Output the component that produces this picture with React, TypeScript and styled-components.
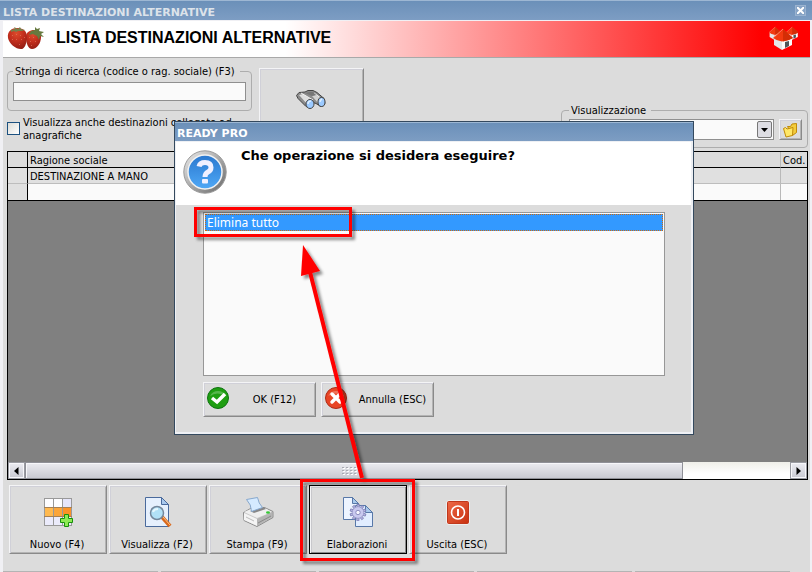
import React from 'react';
import styled, { createGlobalStyle, css } from 'styled-components';

const Global = createGlobalStyle`
  *, *::before, *::after { box-sizing: border-box; }
  html, body { margin: 0; height: 100%; }
  #root { height: 100%; }
  body, button, input, select, table {
    font-family: "DejaVu Sans Condensed", "DejaVu Sans", sans-serif;
    font-size: 11px;
    line-height: 13px;
    color: #000;
  }
`;

const Window = styled.div`
  position: relative;
  display: flex;
  flex-direction: column;
  width: 100%;
  height: 100vh;
  min-height: 572px;
  overflow: hidden;
  background: #dcdcdc;
`;

const TitleBar = styled.header`
  display: flex;
  flex: none;
  align-items: center;
  justify-content: space-between;
  height: 20px;
  padding: 4px 6px 0 3px;
  border-top: 1px solid #9db7d3;
  background: linear-gradient(#6b90b9, #7d9dc3);
`;

const TitleText = styled.span<{ $active?: boolean }>`
  font-family: "DejaVu Sans", sans-serif;
  font-size: 11px;
  font-weight: 700;
  line-height: 14px;
  white-space: nowrap;
  color: ${p => (p.$active ? '#fff' : '#dde3ea')};
`;

const CloseButton = styled.button`
  display: flex;
  align-items: center;
  justify-content: center;
  width: 11px;
  height: 11px;
  margin-bottom: 4px;
  padding: 0;
  border: 1px solid #9ab3d0;
  background: #86a3c5;
`;

const Frame = styled.div`
  display: flex;
  flex: 1;
  flex-direction: column;
  min-height: 0;
  border: solid #f0f0f4;
  border-width: 1px 2px 0 3px;
`;

const Banner = styled.div`
  display: flex;
  flex: none;
  align-items: center;
  gap: 11px;
  height: 37px;
  padding: 0 10px 2px 4px;
  border-bottom: 1px solid #a9a9a9;
  background: linear-gradient(90deg, #fff 35%, #f00 94%);
`;

const BannerTitle = styled.h1`
  flex: 1;
  margin: 0;
  font: 700 16px/20px "Liberation Sans", sans-serif;
  white-space: nowrap;
`;

const Filters = styled.section`
  display: flex;
  flex: none;
  justify-content: space-between;
  height: 93px;
  padding: 7px 2px 0 4px;
`;

const FilterLeft = styled.div`
  display: flex;
  gap: 7px;
`;

const SearchColumn = styled.div`
  display: flex;
  flex-direction: column;
  gap: 5px;
  width: 245px;
`;

const Group = styled.fieldset`
  min-width: 0;
  margin: 0;
  border: 1px solid #adadad;
  border-radius: 4px;
`;

const SearchGroup = styled(Group)`
  height: 46px;
  padding: 4px 5px 0;
`;

const ViewGroup = styled(Group)`
  align-self: flex-end;
  width: 247px;
  height: 44px;
  padding: 2px 5px 0 7px;
  margin-bottom: 3px;
`;

const Legend = styled.legend`
  padding: 0 5px 0 2px;
  white-space: nowrap;
`;

const ViewRow = styled.div`
  display: flex;
  gap: 5px;
`;

const SearchInput = styled.input`
  display: block;
  width: 100%;
  height: 19px;
  padding: 0 3px;
  border: 1px solid #8f8f8f;
  background: #fafafa;
`;

const CheckLabel = styled.label`
  display: flex;
  align-items: flex-start;
  gap: 3px;
  line-height: 13px;
`;

const CheckBox = styled.input`
  flex: none;
  appearance: none;
  width: 13px;
  height: 13px;
  margin: 6px 0 0;
  border: 1px solid #1c5180;
  background: linear-gradient(135deg, #dcdcd7, #fff);
`;

const raised = css`
  border: 1px solid;
  border-color: #f4f4f6 #8a8a8a #8a8a8a #f4f4f6;
  background: #dcdcdc;
  box-shadow: inset 1px 1px #d0d0d8, inset -1px -1px #b4b4b4;
`;

const SearchButton = styled.button`
  ${raised}
  display: flex;
  justify-content: center;
  width: 105px;
  height: 72px;
  margin-top: 3px;
  padding: 21px 2px 0 0;
`;

const SelectWrap = styled.div`
  position: relative;
  flex: 1;
`;

const Select = styled.select`
  appearance: none;
  width: 100%;
  height: 21px;
  border: 1px solid #8f8f8f;
  border-radius: 0;
  background: #fafafa;
`;

const SelectArrow = styled.svg`
  position: absolute;
  top: 2px;
  right: 2px;
  pointer-events: none;
`;

const FolderButton = styled.button`
  ${raised}
  display: flex;
  align-items: center;
  justify-content: center;
  width: 23px;
  height: 21px;
  padding: 0 1px 0 0;
`;

const GridPanel = styled.section`
  display: flex;
  flex: 1;
  flex-direction: column;
  justify-content: space-between;
  min-height: 0;
  margin: 0 2px 0 4px;
  border: 1px solid #000;
  background: #808080;
`;

const Table = styled.table`
  width: 100%;
  border-collapse: separate;
  border-spacing: 0;
  table-layout: fixed;
  border-bottom: 1px solid #000;
`;

const Cell = styled.td<{ $white?: boolean; $marker?: boolean }>`
  height: 16px;
  padding: 1px 0 0 2px;
  overflow: hidden;
  border-right: 1px solid ${p => (p.$marker ? '#000' : '#b9b9b9')};
  border-bottom: 1px solid #bdbdbd;
  background: ${p => (p.$white ? '#fafafa' : '#e0e0e0')};
  white-space: nowrap;
  &:last-child { border-right: 0; }
  tr:last-child > & { border-bottom: 0; }
`;

const HeadCell = styled.th<{ $marker?: boolean }>`
  height: 16px;
  padding: 1px 0 0 2px;
  overflow: hidden;
  border-right: 1px solid ${p => (p.$marker ? '#000' : '#b9b9b9')};
  border-bottom: 1px solid #000;
  background: #dcdcdc;
  font-weight: 400;
  text-align: left;
  white-space: nowrap;
  &:last-child { border-right: 0; }
`;

const ScrollBar = styled.div`
  display: flex;
  height: 17px;
  background: linear-gradient(#efefe9, #fff 70%);
`;

const ScrollEnd = styled.button`
  display: flex;
  flex: none;
  align-items: center;
  justify-content: center;
  width: 17px;
  height: 17px;
  padding: 0;
  border: 1px solid #9a9ba2;
  background: linear-gradient(#ececf2, #c9cad2);
  box-shadow: inset 0 0 0 1px #f7f7fa;
`;

const ScrollTrack = styled.div`
  display: flex;
  flex: 1;
`;

const ScrollThumb = styled.div`
  display: flex;
  align-items: center;
  justify-content: center;
  width: 86%;
  padding-right: 8px;
  border: 1px solid #8f9097;
  background: linear-gradient(#ebebf0, #c9cad2);
  box-shadow: inset 1px 1px #f7f7fa;
`;

const Toolbar = styled.nav`
  display: flex;
  flex: none;
  gap: 2px;
  padding: 5px 6px 17px;
`;

const ToolButton = styled.button<{ $current?: boolean }>`
  ${raised}
  display: flex;
  flex-direction: column;
  align-items: center;
  justify-content: space-between;
  width: 98px;
  height: 69px;
  padding: 11px 0 2px;
  ${p => p.$current && css`
    border-color: #000;
    box-shadow: inset 1px 1px #f4f4f6, inset -1px -1px #8a8a8a, inset 2px 2px #c8c8cc;
  `}
`;

const ToolText = styled.span`
  padding-right: 2px;
`;

const StatusBar = styled.footer`
  display: flex;
  flex: none;
  gap: 3px;
  height: 1px;
  padding-right: 20px;
`;

const StatusPane = styled.div`
  flex: 1;
  background: #b4b4b4;
`;

const Dialog = styled.div`
  position: absolute;
  top: 121px;
  right: 118px;
  left: 174px;
  display: flex;
  flex-direction: column;
  border: 1px solid #34495e;
  background: #dcdcdc;
`;

const DialogTitle = styled(TitleBar)`
  height: 19px;
  padding-left: 2px;
`;

const DialogFrame = styled.div`
  border: solid #eef0f4;
  border-width: 1px 2px 2px 1px;
`;

const DialogHead = styled.div`
  display: flex;
  gap: 13px;
  height: 63px;
  padding: 6px 6px 0;
  background: #fff;
`;

const Question = styled.h2`
  margin: 0;
  font: 700 13px/16px "DejaVu Sans", sans-serif;
  white-space: nowrap;
`;

const DialogBody = styled.div`
  padding: 7px 26px 15px 27px;
`;

const Options = styled.ul`
  height: 164px;
  margin: 0;
  padding: 1px;
  border: 1px solid #979797;
  background: #fafafa;
  list-style: none;
`;

const Option = styled.li`
  height: 17px;
  padding: 0 1px;
  border: 1px dotted #cc6a10;
  background: #3399ff;
  font: 12px/16px "Noto Sans", sans-serif;
  color: #fff;
`;

const DialogActions = styled.div`
  display: flex;
  gap: 5px;
  padding: 6px 0 0;
`;

const DialogButton = styled.button`
  ${raised}
  display: flex;
  align-items: center;
  width: 113px;
  height: 35px;
  padding: 0 3px;
`;

const ButtonIcon = styled.svg`
  flex: none;
  margin-bottom: 4px;
`;

const DialogButtonText = styled.span`
  flex: 1;
  padding-left: 6px;
  text-align: center;
`;

const Annotations = styled.svg`
  position: absolute;
  top: 0;
  left: 0;
  pointer-events: none;
`;

const Strawberries = () => (
  <svg width="38" height="26" viewBox="0 0 38 26" aria-hidden="true">
    <defs>
      <radialGradient id="berry" cx=".45" cy=".25" r=".75">
        <stop offset="0" stopColor="#dd4b2c" />
        <stop offset=".5" stopColor="#c32f1e" />
        <stop offset="1" stopColor="#951d13" />
      </radialGradient>
    </defs>
    <path d="M19 12c0-5 4-7 8-7 5 0 7 3 7 7 0 6-4 12-9 12-4 0-6-6-6-12z" fill="url(#berry)" />
    <path d="M1 13C0 6 5 3 10 3s10 2 10 9c0 7-3 12-5 12-5 1-13-5-14-11z" fill="url(#berry)" />
    <path d="M4 5l4-1-1-2 4 2 2-2 1 2 4 1-3 1-4 0-2 1-2-1-3 1z" fill="#75814c" />
    <path d="M24 6l4-1 0-3 2 2 3-1-1 3 5 1-3 2 3 3-4-1-1 4-2-4-4-2-4 1z" fill="#66793f" />
    <g fill="#e98368" opacity=".6">
      {[[5, 10], [9, 9], [13, 10], [5, 14], [9, 14], [14, 14], [12, 19], [17, 12], [22, 12], [26, 12], [23, 16], [28, 16], [24, 20]].map(([x, y]) => (
        <rect key={`${x}-${y}`} x={x} y={y} width="1" height="1" />
      ))}
    </g>
  </svg>
);

const House = ({ x, y, s }: { x: number; y: number; s: number }) => (
  <g transform={`translate(${x} ${y}) scale(${s})`}>
    <path d="M1 9l8 3v9l-8-5z" fill="#e4e6e8" />
    <path d="M9 12l10-3v7l-10 5z" fill="#fafafa" />
    <path d="M12 13l4-1v5l-4 2z" fill="#4f5558" />
    <path d="M10 0L0 9q4 3 9 3.500Q15 12 20 9z" fill="#f23a10" />
    <path d="M10 0l10 9q-5 3-10 3.500z" fill="#d42d06" />
    <path d="M10 0L0 9" stroke="#ff9a80" strokeWidth=".8" />
  </g>
);

const Houses = () => (
  <svg width="32" height="26" viewBox="0 0 32 26" aria-hidden="true">
    <House x={1} y={2} s={0.62} />
    <House x={18} y={2} s={0.62} />
    <House x={5} y={4} s={1} />
  </svg>
);

const Binoculars = () => (
  <svg width="30" height="20" viewBox="0 0 30 20" aria-hidden="true">
    <path d="M.500 5.500L3 2.500l6-.5 3-1.500h5l4 2 7 6 1 5-4 3-5-3-3-1-4 5-3-1-8-8z" fill="#8c8c8c" stroke="#444" />
    <path d="M3 5l4-1 9 6-4 5z" fill="#dedede" />
    <path d="M16 6l4-1 6 4-3 5z" fill="#d2d2d2" />
    <path d="M5 3l12 7M18 3l8 6" stroke="#f3f3f3" />
    <path d="M9 3l4-1h4l3 3-4 1z" fill="#777" />
    <ellipse cx="14" cy="14" rx="4" ry="4.500" fill="#9ccaff" stroke="#444" />
    <ellipse cx="25.500" cy="12" rx="3.500" ry="4.500" fill="#9ccaff" stroke="#444" />
    <path d="M12 14q0-3 3-3M24 12q0-2 2-3" fill="none" stroke="#ddeeff" strokeWidth="1.500" />
  </svg>
);

const Folders = () => (
  <svg width="16" height="16" viewBox="0 0 16 16" aria-hidden="true">
    <path d="M5.500 4.500l3 0 1.500-2.500 4.500-.5v9l-4 3z" fill="#f3cc3c" stroke="#c08a08" />
    <path d="M1.500 6.500l2-1 1.500 1.500 6-1.500-.5 8-6.500 1.500z" fill="#ffe766" stroke="#c08a08" />
  </svg>
);

const NewIcon = () => (
  <svg width="30" height="31" viewBox="0 0 30 31" aria-hidden="true">
    <rect x="1" y="1" width="27" height="27" fill="#fdfdff" />
    <rect x="20" y="1" width="8" height="9" fill="#e5e5fa" />
    <rect x="1" y="20" width="27" height="8" fill="#ebebfb" />
    <rect x="1" y="10" width="9" height="9" fill="#ffb94f" />
    <rect x="10" y="10" width="9" height="9" fill="#fba53a" />
    <rect x="19" y="10" width="9" height="9" fill="#fb9226" />
    <path d="M1 1.500h28M1 28.500h28M1.500 1v28M28.500 1v28M10.500 1v28M19.500 1v28" stroke="#999" fill="none" />
    <path d="M1 10.500h28M1 19.500h28" stroke="#a58055" />
    <path d="M21.500 17.500h4v4h4v4h-4v4h-4v-4h-4v-4h4z" fill="#8eea55" stroke="#17900b" />
  </svg>
);

const ViewIcon = () => (
  <svg width="28" height="31" viewBox="0 0 28 31" aria-hidden="true">
    <path d="M1.500.5h16l7 7v22h-23z" fill="#e6f0fd" stroke="#4a6a9c" />
    <path d="M17.500.5v7h7z" fill="#a9c9ee" stroke="#4a6a9c" />
    <path d="M18 20l8 9" stroke="#d9681c" strokeWidth="4" />
    <path d="M19 20l7 8" stroke="#ffc586" strokeWidth="1" />
    <circle cx="13" cy="16" r="6.500" fill="#b1e1f7" stroke="#74879b" strokeWidth="1.500" />
    <path d="M9 15q1-3 5-3" stroke="#e7f8ff" strokeWidth="2" fill="none" />
  </svg>
);

const PrintIcon = () => (
  <svg width="32" height="31" viewBox="0 0 32 31" aria-hidden="true">
    <path d="M1.500 15.500l7-4 14-1 8.500 4v6l-16 9-13-6z" fill="#c9c9c9" stroke="#8b8b8b" />
    <path d="M2 15l7-3 14-1 7 4-15 6z" fill="#efefef" />
    <path d="M2 16l13 6v7L2 23z" fill="#f4f4f4" />
    <path d="M15 22l15-7v5l-15 9z" fill="#b4b4b4" />
    <path d="M8 14l14-4 2 2-12 4z" fill="#888" />
    <path d="M4.500 2.500l11-2q1 6 5 10l-11 4q0-7-5-12z" fill="#d5eaff" stroke="#87a8cd" />
    <path d="M4 20l8 4" fill="none" stroke="#bbb" />
    <path d="M16 26l13-7" stroke="#8a8a8a" />
    <ellipse cx="26" cy="15.500" rx="2" ry="1.200" fill="#35c834" />
  </svg>
);

const gearTeeth = [0, 36, 72, 108, 144, 180, 216, 252, 288, 324];

const ProcessIcon = () => (
  <svg width="32" height="31" viewBox="0 0 32 31" aria-hidden="true">
    <path d="M1.500.5h9l6 6v16h-15z" fill="#edf4ff" stroke="#5878a8" />
    <path d="M10.500.5v6h6z" fill="#a8c9ec" stroke="#5878a8" />
    <path d="M13.500 8.500h10l7 7v14h-17z" fill="#e1edff" stroke="#5878a8" />
    <path d="M23.500 8.500v7h7z" fill="#a8c9ec" stroke="#5878a8" />
    {gearTeeth.map(a => (
      <rect key={a} x="15" y="7.500" width="2.200" height="4" fill="#b5b5e0" stroke="#7777b0" strokeWidth=".7" transform={`rotate(${a} 16 15.500)`} />
    ))}
    <circle cx="16" cy="15.500" r="5.800" fill="#c9c9ef" stroke="#8080b6" strokeWidth=".5" />
    <circle cx="16" cy="15.500" r="2.200" fill="#f6f6ff" stroke="#7777b0" strokeWidth=".8" />
  </svg>
);

const ExitIcon = () => (
  <svg width="24" height="31" viewBox="0 0 24 31" aria-hidden="true">
    <defs>
      <linearGradient id="exit" x1="0" y1="0" x2="1" y2="1">
        <stop offset="0" stopColor="#ee6a48" />
        <stop offset="1" stopColor="#c8300f" />
      </linearGradient>
    </defs>
    <rect x=".5" y="3.500" width="23" height="24" rx="2" fill="#fff" />
    <rect x="1.500" y="4.500" width="21" height="22" rx="1" fill="url(#exit)" stroke="#c0381c" />
    <circle cx="12" cy="15.500" r="6.500" fill="none" stroke="#fff" strokeWidth="1.600" />
    <path d="M12 12v7" stroke="#fff" strokeWidth="2" />
  </svg>
);

const QuestionIcon = () => (
  <svg width="46" height="46" viewBox="0 0 46 46" aria-hidden="true">
    <defs>
      <linearGradient id="ring" x1="0" y1="0" x2="1" y2="1">
        <stop offset="0" stopColor="#eee" />
        <stop offset="1" stopColor="#666" />
      </linearGradient>
      <linearGradient id="disc" x1="0" y1="0" x2="0" y2="1">
        <stop offset="0" stopColor="#2a78cf" />
        <stop offset="1" stopColor="#4fa8f6" />
      </linearGradient>
    </defs>
    <circle cx="23" cy="24" r="21.200" fill="url(#ring)" stroke="#999" />
    <circle cx="23" cy="24" r="17" fill="url(#disc)" stroke="#f2f2f2" strokeWidth="1.500" />
    <path d="M17 18.500q1-4 6-4 6 0 6 5 0 3-3 4.500-3 1.500-3 5" fill="none" stroke="#f0f0ff" strokeWidth="5" />
    <rect x="20" y="31" width="6" height="4.500" rx="1" fill="#f0f0ff" />
  </svg>
);

const RoundIcon = ({ ok }: { ok?: boolean }) => (
  <ButtonIcon width="24" height="24" viewBox="0 0 24 24" aria-hidden="true">
    <circle cx="11" cy="12" r="10.500" fill={ok ? '#1f9e12' : '#e84525'} stroke={ok ? '#0d7410' : '#ae2a16'} />
    <path d="M3 10a9 9 0 0116 0q-9-5-16 0z" fill="#fff" opacity=".25" />
    {ok
      ? <path d="M5 12l5 4 8-8" fill="none" stroke="#fff" strokeWidth="3.500" />
      : <path d="M7 8l8 8M15 8l-8 8" stroke="#fff" strokeWidth="3.500" strokeLinecap="round" />}
  </ButtonIcon>
);

const Triangle = ({ dir }: { dir: 'left' | 'right' }) => (
  <svg width="5" height="8" viewBox="0 0 5 8" aria-hidden="true">
    <path d={dir === 'left' ? 'M4.500 0v8L0 4z' : 'M.5 0v8L5 4z'} />
  </svg>
);

const Grip = () => (
  <svg width="16" height="8" viewBox="0 0 16 8" aria-hidden="true">
    {[0, 3, 6].map(y => [0, 4, 8, 12].map(x => (
      <g key={`${x}-${y}`}>
        <rect x={x + 1} y={y + 1} width="2" height="1" fill="#fff" />
        <rect x={x} y={y} width="2" height="1" fill="#a9aab2" />
      </g>
    )))}
  </svg>
);

const tools = [
  { label: 'Nuovo (F4)', icon: <NewIcon /> },
  { label: 'Visualizza (F2)', icon: <ViewIcon /> },
  { label: 'Stampa (F9)', icon: <PrintIcon /> },
  { label: 'Elaborazioni', icon: <ProcessIcon />, current: true },
  { label: 'Uscita (ESC)', icon: <ExitIcon /> },
];

export default function App() {
  return (
    <>
      <Global />
      <Window>
        <TitleBar>
          <TitleText>LISTA DESTINAZIONI ALTERNATIVE</TitleText>
          <CloseButton aria-label="Chiudi">
            <svg width="7" height="7" viewBox="0 0 7 7"><path d="M0 0l7 7M7 0L0 7" stroke="#fff" strokeWidth="2" /></svg>
          </CloseButton>
        </TitleBar>
        <Frame>
          <Banner>
            <Strawberries />
            <BannerTitle>LISTA DESTINAZIONI ALTERNATIVE</BannerTitle>
            <Houses />
          </Banner>
          <Filters>
            <FilterLeft>
              <SearchColumn>
                <SearchGroup>
                  <Legend><label htmlFor="search">Stringa di ricerca (codice o rag. sociale) (F3)</label></Legend>
                  <SearchInput id="search" type="text" />
                </SearchGroup>
                <CheckLabel>
                  <CheckBox type="checkbox" />
                  <span>Visualizza anche destinazioni collegate ad anagrafiche</span>
                </CheckLabel>
              </SearchColumn>
              <SearchButton aria-label="Cerca"><Binoculars /></SearchButton>
            </FilterLeft>
            <ViewGroup>
              <Legend><label htmlFor="view">Visualizzazione</label></Legend>
              <ViewRow>
                <SelectWrap>
                  <Select id="view"><option aria-label="Nessuna" /></Select>
                  <SelectArrow width="15" height="17" viewBox="0 0 15 17">
                    <rect x=".5" y=".5" width="14" height="16" rx="1.500" fill="#dddde3" stroke="#777" />
                    <path d="M4 7h7l-3.500 4z" />
                  </SelectArrow>
                </SelectWrap>
                <FolderButton aria-label="Apri"><Folders /></FolderButton>
              </ViewRow>
            </ViewGroup>
          </Filters>
          <GridPanel>
            <Table>
              <colgroup>
                <col width="20" />
                <col />
                <col width="26" />
              </colgroup>
              <thead>
                <tr><HeadCell $marker /><HeadCell>Ragione sociale</HeadCell><HeadCell>Cod.</HeadCell></tr>
              </thead>
              <tbody>
                <tr><Cell $marker /><Cell>DESTINAZIONE A MANO</Cell><Cell /></tr>
                <tr><Cell $marker /><Cell $white /><Cell $white /></tr>
              </tbody>
            </Table>
            <ScrollBar>
              <ScrollEnd aria-label="Scorri a sinistra"><Triangle dir="left" /></ScrollEnd>
              <ScrollTrack><ScrollThumb><Grip /></ScrollThumb></ScrollTrack>
              <ScrollEnd aria-label="Scorri a destra"><Triangle dir="right" /></ScrollEnd>
            </ScrollBar>
          </GridPanel>
          <Toolbar>
            {tools.map(t => (
              <ToolButton key={t.label} $current={t.current}>{t.icon}<ToolText>{t.label}</ToolText></ToolButton>
            ))}
          </Toolbar>
          <StatusBar>{[0, 1, 2, 3, 4].map(i => <StatusPane key={i} />)}</StatusBar>
        </Frame>

        <Dialog role="dialog" aria-labelledby="question">
          <DialogTitle><TitleText $active>READY PRO</TitleText></DialogTitle>
          <DialogFrame>
            <DialogHead>
              <QuestionIcon />
              <Question id="question">Che operazione si desidera eseguire?</Question>
            </DialogHead>
            <DialogBody>
              <Options role="listbox" aria-labelledby="question">
                <Option role="option" aria-selected="true">Elimina tutto</Option>
              </Options>
              <DialogActions>
                <DialogButton><RoundIcon ok /><DialogButtonText>OK (F12)</DialogButtonText></DialogButton>
                <DialogButton><RoundIcon /><DialogButtonText>Annulla (ESC)</DialogButtonText></DialogButton>
              </DialogActions>
            </DialogBody>
          </DialogFrame>
        </Dialog>

        <Annotations width="812" height="572" viewBox="0 0 812 572" aria-hidden="true">
          <defs>
            <filter id="shade" x="-20%" y="-20%" width="140%" height="140%">
              <feDropShadow dx="3" dy="3" stdDeviation="1.500" floodColor="#000" floodOpacity=".45" />
            </filter>
          </defs>
          <g filter="url(#shade)">
            <rect x="195.500" y="208.500" width="155" height="27" fill="none" stroke="#f00" strokeWidth="3" />
            <rect x="301.500" y="480.500" width="112" height="79" fill="none" stroke="#f00" strokeWidth="3" />
            <path d="M362 478L310 272" stroke="#f00" strokeWidth="4" />
            <path d="M303 245l17 26-19 5z" fill="#f00" />
          </g>
        </Annotations>
      </Window>
    </>
  );
}
